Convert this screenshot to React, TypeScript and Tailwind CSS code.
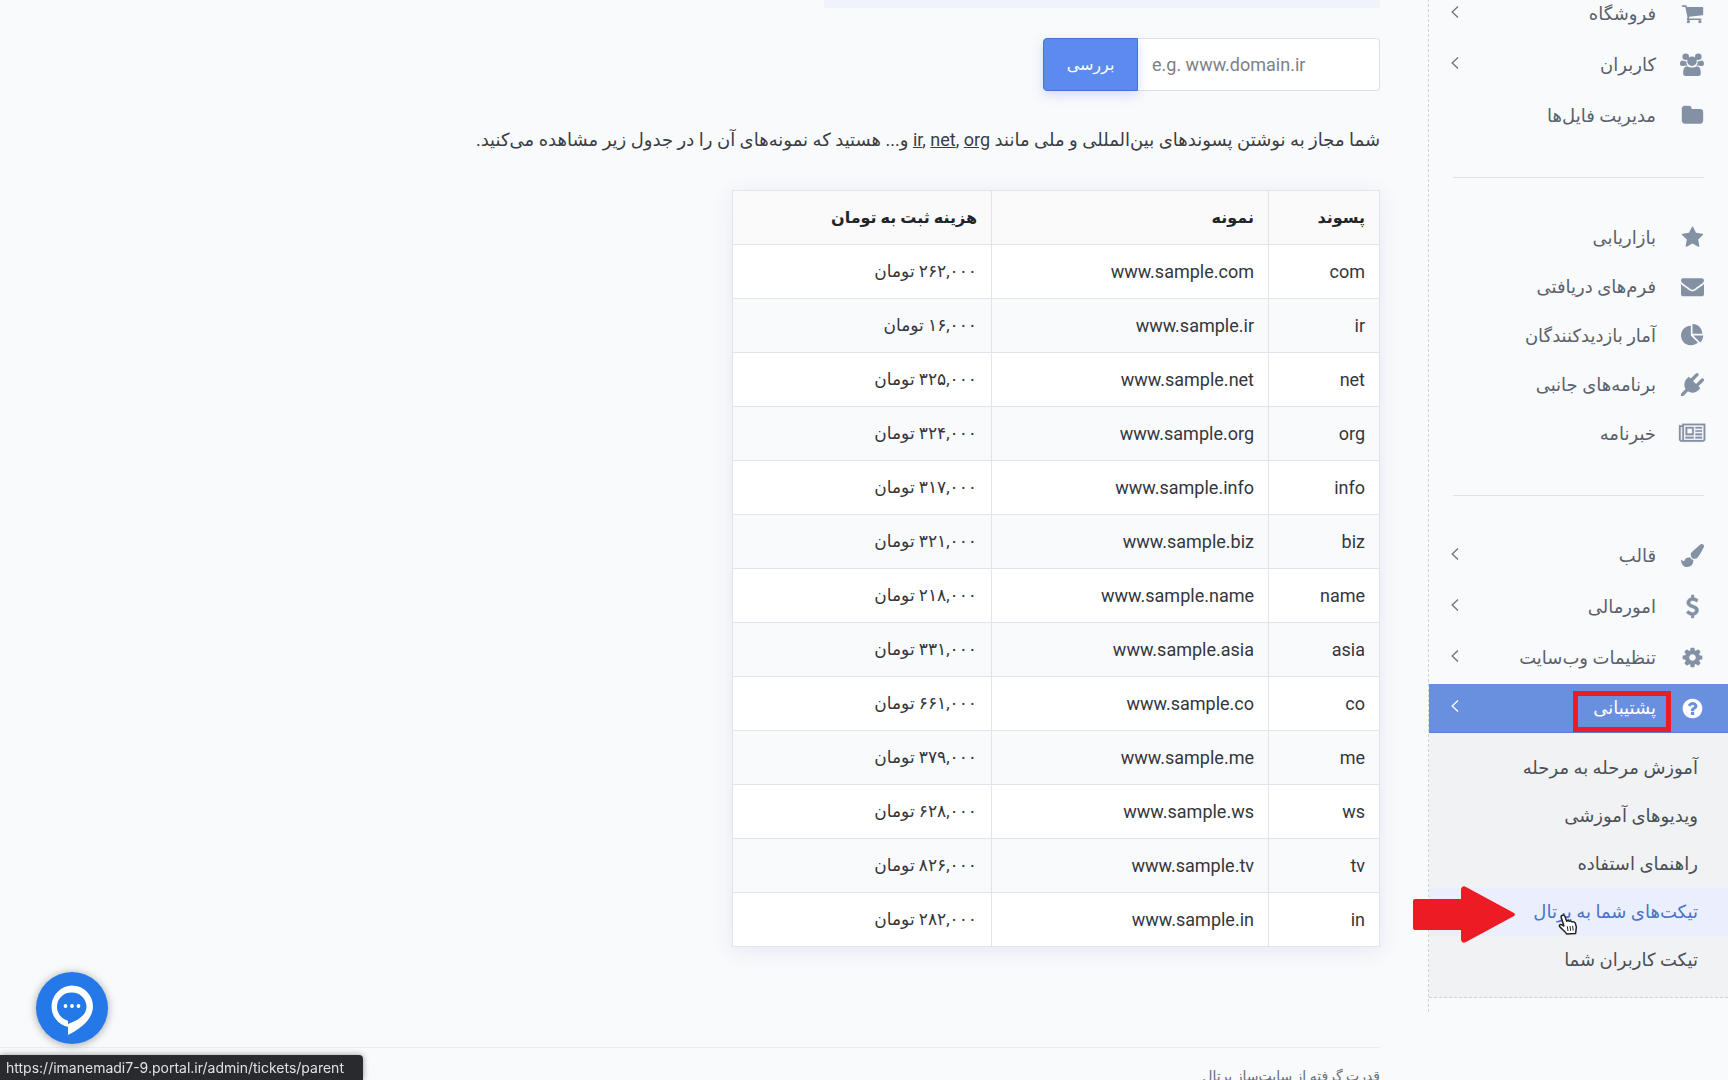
import type { ReactNode } from "react";

type IconProps = { path: string; viewBox?: string; stroke?: number };

type MenuItem = {
  title: string;
  icon: IconProps;
  expandable?: boolean;
};

const icons = {
  cart: {
    path: "M704 1536q0 52-38 90t-90 38-90-38-38-90 38-90 90-38 90 38 38 90zm896 0q0 52-38 90t-90 38-90-38-38-90 38-90 90-38 90 38 38 90zm128-1088v512q0 24-16.5 42.5t-40.5 21.5l-1044 122q13 60 13 70 0 16-24 64h920q26 0 45 19t19 45-19 45-45 19h-1024q-26 0-45-19t-19-45q0-11 8-31.5t16-36 21.5-40 15.5-29.5l-177-823h-204q-26 0-45-19t-19-45 19-45 45-19h256q16 0 28.5 6.5t19.5 15.5 13 24.5 8 26 5.5 29.5 4.5 26h1201q26 0 45 19t19 45z",
  },
  users: {
    viewBox: "0 0 24 23",
    path: "M9 3.700A3.300 3.300 0 1 1 2.400 3.700 3.300 3.300 0 1 1 9 3.700ZM21.600 3.700A3.300 3.300 0 1 1 15 3.700 3.300 3.300 0 1 1 21.600 3.700ZM16.800 8.200A4.800 4.800 0 1 1 7.200 8.200 4.800 4.800 0 1 1 16.800 8.200ZM0 11C0 8.800.8 7.500 2.300 7.500 3.600 8.200 5.100 8.300 6.300 7.900 6.200 10 6.700 11.500 7.700 12.700 6.600 12.400 5.200 12.500 4.200 13H2C.8 13 0 12.300 0 11ZM24 11C24 8.800 23.200 7.500 21.700 7.500 20.400 8.200 18.900 8.300 17.700 7.900 17.800 10 17.300 11.500 16.300 12.700 17.400 12.400 18.800 12.500 19.800 13H22C23.200 13 24 12.300 24 11ZM7.200 13.300C9.600 15 14.400 15 16.800 13.300 19.700 13.300 20.800 16.500 20.800 20.200 20.800 22 20 23 18.400 23H5.600C4 23 3.200 22 3.200 20.200 3.200 16.500 4.300 13.300 7.200 13.300Z",
  },
  folder: {
    path: "M1728 608v704q0 92-66 158t-158 66h-1216q-92 0-158-66t-66-158v-960q0-92 66-158t158-66h320q92 0 158 66t66 158v32h672q92 0 158 66t66 158z",
  },
  star: {
    path: "M1728 647q0 22-26 48l-363 354 86 500q1 7 1 20 0 21-10.5 35.5t-30.5 14.5q-19 0-40-12l-449-236-449 236q-22 12-40 12-21 0-31.5-14.5t-10.5-35.5q0-6 2-20l86-500-364-354q-25-27-25-48 0-37 56-46l502-73 225-455q19-41 49-41t49 41l225 455 502 73q56 9 56 46z",
  },
  envelope: {
    path: "M1792 710v794q0 66-47 113t-113 47h-1472q-66 0-113-47t-47-113v-794q44 49 101 87 362 246 497 345 57 42 92.5 65.5t94.5 48 110 24.5h2q51 0 110-24.5t94.5-48 92.5-65.5q170-123 498-345 57-39 100-87zm0-294q0 79-49 151t-122 123q-376 261-468 325-10 7-42.5 31t-54 38.5-52 32.5-57.5 27-50 9h-2q-23 0-50-9t-57.5-27-52-32.5-54-38.5-42.5-31q-91-64-262-182.5t-205-142.5q-62-42-117-115.5t-55-136.5q0-78 41.5-130t118.5-52h1472q65 0 112.5 47t47.5 113z",
  },
  pie: {
    path: "M768 890l546 546q-106 108-247.5 168t-298.5 60q-209 0-385.5-103t-279.5-279.5-103-385.5 103-385.5 279.5-279.5 385.5-103v762zm187 6h773q0 157-60 298.5t-168 247.5zm709-128h-768v-768q209 0 385.5 103t279.5 279.5 103 385.5z",
  },
  plug: {
    path: "M1755 453q37 38 37 90.5t-37 90.5l-401 400 150 150-160 160q-163 163-389.5 186.5t-411.5-100.5l-362 362h-181v-181l362-362q-124-185-100.5-411.5t186.5-389.5l160-160 150 150 400-401q38-37 91-37t90 37 37 90.5-37 90.5l-400 401 234 234 401-400q38-37 91-37t90 37z",
  },
  newspaper: {
    viewBox: "0 0 2048 1792",
    stroke: 20,
    path: "M1024 512h-384v384h384v-384zm128 640v128h-640v-128h640zm0-768v640h-640v-640h640zm640 768v128h-512v-128h512zm0-256v128h-512v-128h512zm0-256v128h-512v-128h512zm0-256v128h-512v-128h512zm-1536 960v-960h-128v960q0 26 19 45t45 19 45-19 19-45zm1664 0v-1088h-1536v1088q0 33-11 64h1483q26 0 45-19t19-45zm128-1216v1216q0 80-56 136t-136 56h-1664q-80 0-136-56t-56-136v-1088h256v-128h1792z",
  },
  brush: {
    path: "M1615 0q70 0 122.5 46.5t52.5 116.5q0 63-45 151-332 629-465 752-97 91-218 91-126 0-216.5-92.5t-90.5-219.5q0-128 92-212l638-579q59-54 130-54zm-909 1034q39 76 106.5 130t150.5 76l1 71q4 213-129.5 347t-348.5 134q-123 0-218-46.5t-152.5-127.5-86.5-183-29-220q7 5 41 30t62 44.5 59 36.5 46 17q41 0 55-37 25-66 57.5-112.5t69.5-76 88-47.5 103-25.5 125-10.5z",
  },
  dollar: {
    stroke: 40,
    path: "M1362 1185q0 153-99.5 263.5t-258.5 136.5v175q0 14-9 23t-23 9h-135q-13 0-22.5-9.5t-9.5-22.5v-175q-66-9-127.5-31t-101.5-44.5-74-48-46.5-37.5-17.5-18q-17-21-2-41l103-135q7-10 23-12 15-2 24 9l2 2q113 99 243 125 37 8 74 8 81 0 142.5-43t61.5-122q0-28-15-53t-33.5-42-58.5-37.5-66-32-80-32.5q-39-16-61.5-25t-61.5-26.5-62.5-31-56.5-35.5-53.5-42.5-43.5-49-35.5-58-21-66.5-8.5-78q0-138 98-242t255-134v-180q0-13 9.5-22.5t22.5-9.5h135q14 0 23 9t9 23v176q57 6 110.5 23t87 33.5 63.5 37.5 39 29 15 14q17 18 5 38l-81 146q-8 15-23 16-14 3-27-7-3-3-14.5-12t-39-26.5-58.5-32-74.5-26-85.5-11.5q-95 0-155 43t-60 111q0 26 8.5 48t29.5 41.5 39.5 33 56 31 60.5 27 70 27.5q53 20 81 31.5t76 35 75.5 42.5 62 50 53 63.5 31.5 76.5 13 94z",
  },
  cog: {
    path: "M1152 896q0-106-75-181t-181-75-181 75-75 181 75 181 181 75 181-75 75-181zm512-109v222q0 12-8 23t-20 13l-185 28q-19 54-39 91 35 50 107 138 10 12 10 25t-9 23q-27 37-99 108t-94 71q-12 0-26-9l-138-108q-44 23-91 38-16 136-29 186-7 28-36 28h-222q-14 0-24.5-8.5t-11.5-21.5l-28-184q-49-16-90-37l-141 107q-10 9-25 9-14 0-25-11-126-114-165-168-7-10-7-23 0-12 8-23 15-21 51-66.5t54-70.5q-27-50-41-99l-183-27q-13-2-21-12.5t-8-23.5v-222q0-12 8-23t19-13l186-28q14-46 39-92-40-57-107-138-10-12-10-24 0-10 9-23 26-36 98.5-107.5t94.5-71.5q13 0 26 10l138 107q44-23 91-38 16-136 29-186 7-28 36-28h222q14 0 24.5 8.5t11.5 21.5l28 184q49 16 90 37l142-107q9-9 24-9 13 0 25 10 129 119 165 170 7 8 7 22 0 12-8 23-15 21-51 66.5t-54 70.5q26 50 41 98l183 28q13 2 21 12.5t8 23.5z",
  },
  question: {
    path: "M1024 1376v-192q0-14-9-23t-23-9h-192q-14 0-23 9t-9 23v192q0 14 9 23t23 9h192q14 0 23-9t9-23zm256-672q0-88-55.5-163t-138.5-116-170-41q-243 0-371 213-15 24 8 42l132 100q7 6 19 6 16 0 25-12 53-68 86-92 34-24 86-24 48 0 85.5 26t37.5 59q0 38-20 61t-68 45q-63 28-115.5 86.5t-52.5 125.5v36q0 14 9 23t23 9h192q14 0 23-9t9-23q0-19 21.5-49.5t54.5-49.5q32-18 49-28.5t46-35 44.5-48 28-60.5 12.5-81zm384 192q0 209-103 385.5t-279.5 279.5-385.5 103-385.5-103-279.5-279.5-103-385.5 103-385.5 279.5-279.5 385.5-103 385.5 103 279.5 279.5 103 385.5z",
  },
};

const shopMenu: MenuItem[] = [
  { title: "فروشگاه", icon: icons.cart, expandable: true },
  { title: "کاربران", icon: icons.users, expandable: true },
  { title: "مدیریت فایل‌ها", icon: icons.folder },
];

const marketingMenu: MenuItem[] = [
  { title: "بازاریابی", icon: icons.star },
  { title: "فرم‌های دریافتی", icon: icons.envelope },
  { title: "آمار بازدیدکنندگان", icon: icons.pie },
  { title: "برنامه‌های جانبی", icon: icons.plug },
  { title: "خبرنامه", icon: icons.newspaper },
];

const settingsMenu: MenuItem[] = [
  { title: "قالب", icon: icons.brush, expandable: true },
  { title: "امورمالی", icon: icons.dollar, expandable: true },
  { title: "تنظیمات وب‌سایت", icon: icons.cog, expandable: true },
];

const supportLinks = [
  { title: "آموزش مرحله به مرحله" },
  { title: "ویدیوهای آموزشی" },
  { title: "راهنمای استفاده" },
  { title: "تیکت‌های شما به پرتال", hovered: true },
  { title: "تیکت کاربران شما" },
];

const domains = [
  { suffix: "com", price: "۲۶۲,۰۰۰" },
  { suffix: "ir", price: "۱۶,۰۰۰" },
  { suffix: "net", price: "۳۲۵,۰۰۰" },
  { suffix: "org", price: "۳۲۴,۰۰۰" },
  { suffix: "info", price: "۳۱۷,۰۰۰" },
  { suffix: "biz", price: "۳۲۱,۰۰۰" },
  { suffix: "name", price: "۲۱۸,۰۰۰" },
  { suffix: "asia", price: "۳۳۱,۰۰۰" },
  { suffix: "co", price: "۶۶۱,۰۰۰" },
  { suffix: "me", price: "۳۷۹,۰۰۰" },
  { suffix: "ws", price: "۶۲۸,۰۰۰" },
  { suffix: "tv", price: "۸۲۶,۰۰۰" },
  { suffix: "in", price: "۲۸۲,۰۰۰" },
];

const Icon = ({ path, viewBox = "0 0 1792 1792", stroke = 0 }: IconProps) => (
  <svg
    viewBox={viewBox}
    className="h-[23px] w-auto shrink-0 overflow-visible"
    fill="currentColor"
    stroke="currentColor"
    strokeWidth={stroke}
    aria-hidden="true"
  >
    <path d={path} />
  </svg>
);

const Chevron = () => (
  <svg
    viewBox="0 0 8 12"
    className="h-3 w-2"
    fill="none"
    stroke="currentColor"
    strokeWidth="1.3"
    aria-hidden="true"
  >
    <path d="M7 .6 1.2 6 7 11.4" />
  </svg>
);

const MenuRow = ({ title, icon, expandable }: MenuItem) => (
  <li className={expandable ? "mb-0.5" : ""}>
    <a href="#" className="flex h-[49px] items-center pr-6 pl-[22px]">
      <span className="flex w-6 justify-center text-[#8490a4]">
        <Icon {...icon} />
      </span>
      <span className="mr-6 flex-1 text-[#5b616b]">{title}</span>
      {expandable && (
        <span className="mb-1 text-[#6b7280]">
          <Chevron />
        </span>
      )}
    </a>
  </li>
);

const Divider = () => (
  <hr className="mt-[37px] mr-6 mb-[35px] ml-6 border-[#dfe2e8]" />
);

const PointerArrow = () => (
  <svg
    viewBox="0 0 102 57"
    className="absolute right-[213px] -top-0.5 h-[57px] w-[102px]"
    fill="#ed1c24"
    aria-hidden="true"
  >
    <path d="M0 15Q0 13 2 13H48V3Q49-1 53 1L101 27Q103 28.500 101 30L53 56Q49 58 48 54V44H2Q0 44 0 42Z" />
  </svg>
);

const HandCursor = () => (
  <svg
    viewBox="0 0 20 21"
    className="absolute right-[150px] top-[26px] h-[21px] w-5"
    aria-hidden="true"
  >
    <path
      d="M4.500 1.200C5.700.7 6.600 1.500 7 2.600L8.700 7.200C9.400 6.300 10.700 6.400 11.300 7.300 12.200 6.600 13.400 6.900 14 7.900 15.300 7.300 16.700 7.900 17.300 9.300 18.500 12 18.700 13.700 18 16.300L17.600 19.500 8.600 20C7.400 17.500 4.700 15.900 2 13.100.7 11.700 1.700 10 3.400 10.600L5.900 12 3.200 3.600C2.900 2.500 3.300 1.600 4.500 1.200Z"
      fill="#fff"
      stroke="#222"
      strokeWidth="1.500"
      strokeLinejoin="round"
    />
    <path
      d="M9.300 12.300 10 17M12 12 12.600 16.800M14.600 11.800 15.200 16.500"
      stroke="#222"
    />
  </svg>
);

const Sidebar = () => (
  <nav className="-mt-[11px] w-[300px] shrink-0 self-start border-l border-dashed border-[#cfd2d8] pb-[14px] text-lg">
    <ul>
      {shopMenu.map((item) => (
        <MenuRow key={item.title} {...item} />
      ))}
    </ul>
    <Divider />
    <ul>
      {marketingMenu.map((item) => (
        <MenuRow key={item.title} {...item} />
      ))}
    </ul>
    <Divider />
    <ul>
      {settingsMenu.map((item) => (
        <MenuRow key={item.title} {...item} />
      ))}
      <li>
        <a
          href="#"
          className="flex h-[49px] items-center border-b border-[#5c7fcb] bg-[#698fdf] pr-6 pl-[22px] text-white"
        >
          <span className="flex w-6 justify-center">
            <Icon {...icons.question} />
          </span>
          <span className="relative mr-6">
            پشتیبانی
            <span className="absolute -top-[3px] -right-[15px] h-[41px] w-[98px] border-5 border-[#ed1c24]" />
          </span>
          <span className="mr-auto mb-1">
            <Chevron />
          </span>
        </a>
        <ul className="border-b border-dashed border-[#cfd2d8] bg-[#f1f2f4] pt-[11px] pb-[13px]">
          {supportLinks.map(({ title, hovered }) => (
            <li key={title} className="relative">
              <a
                href="#"
                className={`flex h-12 items-center pr-[30px] ${
                  hovered ? "bg-[#ebeefd] text-[#4a74c9]" : "text-[#4b4f57]"
                }`}
              >
                {title}
              </a>
              {hovered && <PointerArrow />}
              {hovered && <HandCursor />}
            </li>
          ))}
        </ul>
      </li>
    </ul>
  </nav>
);

const Cell = ({ children }: { children: ReactNode }) => (
  <td className="border border-[#e1e4ea] px-3.5">{children}</td>
);

const PriceTable = () => (
  <table className="mt-9 w-[648px] table-fixed border-collapse bg-white text-[#33363c] shadow-[0_4px_20px_rgba(60,60,150,0.09)]">
    <thead>
      <tr className="h-[54px] bg-[#fafafb] text-[#212529]">
        <th className="w-[111px] border border-[#e1e4ea] px-3.5 text-right">
          پسوند
        </th>
        <th className="w-[277px] border border-[#e1e4ea] px-3.5 text-right">
          نمونه
        </th>
        <th className="border border-[#e1e4ea] px-3.5 text-right">
          هزینه ثبت به تومان
        </th>
      </tr>
    </thead>
    <tbody>
      {domains.map(({ suffix, price }) => (
        <tr key={suffix} className="h-[54px] even:bg-[#f9fafc]">
          <Cell>
            <span className="text-lg">{suffix}</span>
          </Cell>
          <Cell>
            <span className="text-lg">www.sample.{suffix}</span>
          </Cell>
          <Cell>
            <span className="text-[17px]">{price} تومان</span>
          </Cell>
        </tr>
      ))}
    </tbody>
  </table>
);

const ChatButton = () => (
  <button
    type="button"
    aria-label="گفتگو"
    className="fixed bottom-9 left-9 size-[72px] rounded-full bg-[#2578e8] shadow-[0_1px_8px_rgba(0,0,0,0.35)]"
  >
    <svg viewBox="0 0 72 72" aria-hidden="true">
      <path
        fill="#fff"
        fillRule="evenodd"
        d="M36 13.500a21 21 0 0 1 21 21C57 44 49.500 54.500 32 63V55A21 21 0 0 1 36 13.500ZM36 20.500a14.300 14.300 0 0 0-4 28.200V52C42 48.500 50.500 43 50.500 34.800A14.400 14.400 0 0 0 36 20.500Z"
      />
      <g fill="#fff">
        <circle cx="29.500" cy="34" r="1.900" />
        <circle cx="36" cy="34" r="1.900" />
        <circle cx="42.500" cy="34" r="1.900" />
      </g>
    </svg>
  </button>
);

const App = () => {
  return (
    <div
      dir="rtl"
      className="flex h-screen overflow-hidden bg-[#f9fafc] font-['Roboto','DejaVu_Sans',sans-serif] text-base"
    >
      <Sidebar />

      <main className="min-w-0 flex-1 pr-12">
        <div className="h-2 w-[556px] bg-[#f1f3fb]" />

        <form className="mt-[30px] flex h-[53px] w-[337px]">
          <input
            type="text"
            dir="ltr"
            aria-label="دامنه"
            placeholder="e.g. www.domain.ir"
            className="min-w-0 flex-1 rounded-r border border-l-0 border-[#dcdfe3] bg-white px-3.5 text-lg placeholder:text-[#7d8187]"
          />
          <button
            type="button"
            className="w-[95px] rounded-l border border-[#4873d0] bg-[#5c8bf0] text-white shadow-[0_4px_12px_rgba(80,110,230,0.22)]"
          >
            بررسی
          </button>
        </form>

        <p className="mt-[35px] text-lg leading-7 whitespace-nowrap text-[#3a3d42]">
          شما مجاز به نوشتن پسوندهای بین‌المللی و ملی مانند{" "}
          <span dir="ltr">
            <u>ir</u>, <u>net</u>, <u>org</u>
          </span>{" "}
          و... هستید که نمونه‌های آن را در جدول زیر مشاهده می‌کنید.
        </p>

        <PriceTable />

        <footer className="mt-[100px] border-t border-[#eaecef] pt-[18px] text-sm text-[#6b7078]">
          قدرت گرفته از سایت‌ساز پرتال
        </footer>
      </main>

      <ChatButton />
      <div
        dir="ltr"
        className="fixed bottom-0 left-0 h-[25px] w-[363px] rounded-tr bg-[#292a2e] px-1.5 font-['Inter',sans-serif] text-sm leading-[26px] text-[#dfe1e4] shadow-[0_0_6px_rgba(0,0,0,0.4)]"
      >
        https://imanemadi7-9.portal.ir/admin/tickets/parent
      </div>
    </div>
  );
};

export default App;
